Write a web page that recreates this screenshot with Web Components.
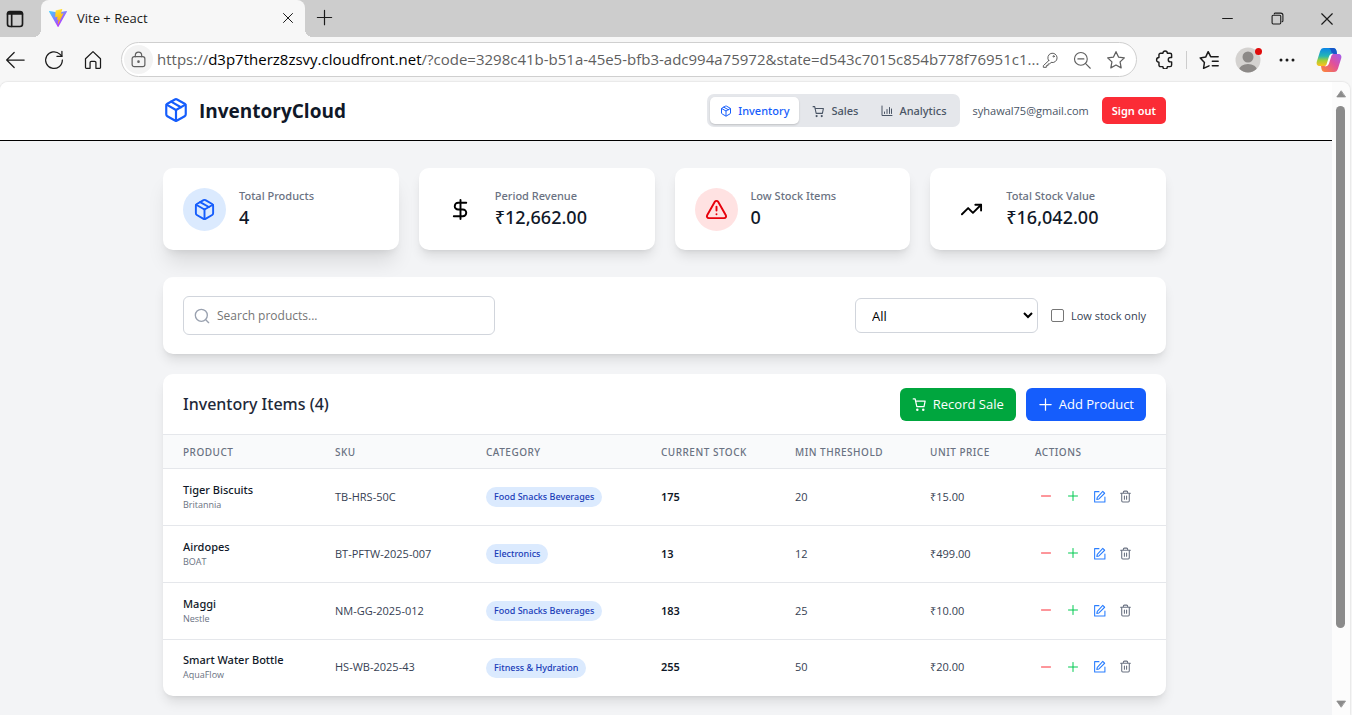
<!DOCTYPE html>
<html lang="en">
<head>
<meta charset="utf-8">
<title>Vite + React</title>
<style>
html, body { margin: 0; height: 100%; }
body { font-family: "Open Sans", "Noto Sans", "Liberation Sans", sans-serif; background: #f7f7f7; overflow: hidden; --medium: "Noto Sans", "Open Sans", sans-serif; }
</style>
</head>
<body>
<browser-window>
  <inventory-app></inventory-app>
</browser-window>
<script>
const ICONS = {
  package: '<path d="M11 21.73a2 2 0 0 0 2 0l7-4A2 2 0 0 0 21 16V8a2 2 0 0 0-1-1.73l-7-4a2 2 0 0 0-2 0l-7 4A2 2 0 0 0 3 8v8a2 2 0 0 0 1 1.73z"/><path d="M12 22V12"/><path d="M3.3 7 12 12l8.7-5"/><path d="m7.5 4.27 9 5.15"/>',
  cart: '<path d="M2 3h3l2.700 12.500h11.500l1.800-9H6"/><circle cx="8.500" cy="20.500" r="1"/><circle cx="18" cy="20.500" r="1"/>',
  chart: '<path d="M2 2v19h20"/><path d="M7 17v-3M12 17V9M17 17V5M21 17V8"/>',
  dollar: '<path d="M12 2v20"/><path d="M18 5H9.500a3.500 3.500 0 0 0 0 7h5a3.500 3.500 0 0 1 0 7H5"/>',
  alert: '<path d="m21.730 18-8-14a2 2 0 0 0-3.480 0l-8 14A2 2 0 0 0 4 21h16a2 2 0 0 0 1.730-3"/><path d="M12 9v4"/><path d="M12 17h.01"/>',
  trend: '<path d="M16 7h6v6"/><path d="m22 7-8.500 8.500-5-5L2 17"/>',
  search: '<circle cx="11" cy="11" r="9"/><path d="m22 22-4-4"/>',
  plus: '<path d="M3 12h18M12 3v18"/>',
  minus: '<path d="M3 12h18"/>',
  edit: '<path d="M11 3H3v19h19v-9"/><path d="M18 2.500 21.500 6 11 16.500l-4 1 1-4z"/>',
  trash: '<path d="M3 6h18M19 6v14a2 2 0 0 1-2 2H7a2 2 0 0 1-2-2V6M8 6V4a2 2 0 0 1 2-2h4a2 2 0 0 1 2 2v2M10 11v6M14 11v6"/>',
  tabs: '<rect x="3" y="3" width="18" height="18" rx="3"/><path d="M3 6h18M4 4.500h16M8 6v15"/>',
  back: '<path d="M23 12H2M11 3l-9 9 9 9"/>',
  reload: '<path d="M22 12a10 10 0 1 1-3-7l2.500 2.500"/><path d="M21.500 1.500v6h-6"/>',
  home: '<path d="M3 10.500 12 2l9 8.500V21a1 1 0 0 1-1 1h-4.500v-7a1.500 1.500 0 0 0-1.500-1.500h-4A1.500 1.500 0 0 0 8.500 15v7H4a1 1 0 0 1-1-1z"/>',
  lock: '<rect x="3" y="8" width="18" height="14" rx="3"/><path d="M7.500 8V6a4.500 4.500 0 0 1 9 0v2"/><circle cx="12" cy="15" r="1"/>',
  key: '<path d="M10 13 2 20.500V23h4.500v-2.500H9V18h2.500l2-2.500A7 7 0 1 0 10 13z"/><circle cx="17.500" cy="6.500" r="1"/>',
  zoomout: '<circle cx="10.500" cy="10.500" r="8.500"/><path d="m23 23-6.500-6.500M6.500 10.500h8"/>',
  star: '<path d="m12 2 3 6.500 7 .9-5.100 4.900 1.300 7.100L12 18l-6.200 3.400 1.300-7.100L2 9.400l7-.9z"/>',
  puzzle: '<path d="M7 4h3a2.800 2.800 0 0 1 5.600 0H19a2 2 0 0 1 2 2v3.500h-1.500a2.700 2.700 0 0 0 0 5.500H21v4a2 2 0 0 1-2 2h-3.400a2.800 2.800 0 0 1-5.600 0H7a2 2 0 0 1-2-2v-3.500a3 3 0 0 1 0-6V6a2 2 0 0 1 2-2z"/>',
  favs: '<path d="M12 19 5.500 22l1-7L1.500 9.500l6.500-1L11 2l3 6h9M16 13.500h7M16 19h7"/>',
  dots: '<g fill="currentColor" stroke="none"><circle cx="4" cy="12" r="2"/><circle cx="12" cy="12" r="2"/><circle cx="20" cy="12" r="2"/></g>',
  close: '<path d="m3 3 18 18M21 3 3 21"/>',
  restore: '<rect x="2" y="6" width="16" height="16" rx="2"/><path d="M6 3.500A2 2 0 0 1 8 2h10a4 4 0 0 1 4 4v10a2 2 0 0 1-1.500 2"/>',
  up: '<path d="M12 5 2 19h20z" fill="currentColor"/>',
  down: '<path d="M12 19 2 5h20z" fill="currentColor"/>'
};

class UiIcon extends HTMLElement {
  connectedCallback() {
    const size = this.getAttribute('size') || 16;
    this.attachShadow({ mode: 'open' }).innerHTML = `
      <style>:host{display:inline-flex;flex:none} svg{display:block}</style>
      <svg width="${size}" height="${size}" viewBox="0 0 24 24" fill="none" stroke="currentColor" aria-hidden="true"
        stroke-width="${this.getAttribute('weight') || 2}" stroke-linecap="round" stroke-linejoin="round">${ICONS[this.getAttribute('name')]}</svg>`;
  }
}
customElements.define('ui-icon', UiIcon);

class TabStrip extends HTMLElement {
  connectedCallback() {
    this.attachShadow({ mode: 'open' }).innerHTML = `
      <style>
        :host{display:flex;height:37px;background:#cdcdcd;color:#1b1b1b}
        button{border:0;background:none;padding:0;color:inherit;display:flex;align-items:center;justify-content:center}
        .menu{width:30px}
        .tab{display:flex;align-items:center;width:264px;margin-left:11px;box-sizing:border-box;padding:0 11px 2px 8px;background:#f7f7f7;border-radius:8px 8px 0 0;font-size:13px;line-height:16px;position:relative}
        .tab::before,.tab::after{content:"";position:absolute;bottom:0;width:8px;height:8px}
        .tab::before{left:-8px;background:radial-gradient(circle at 0 0,transparent 8px,#f7f7f7 8px)}
        .tab::after{right:-8px;background:radial-gradient(circle at 100% 0,transparent 8px,#f7f7f7 8px)}
        .title{flex:1;margin-left:10px}
        .new{width:38px;padding-bottom:2px}
        .win{margin-left:auto;display:flex}
        .win button{width:50px}
      </style>
      <button class="menu" aria-label="Tab actions"><ui-icon name="tabs" size="20" weight="2"></ui-icon></button>
      <div class="tab">
        <svg width="18" height="18" viewBox="0 0 256 257" aria-hidden="true"><defs>
          <linearGradient id="a" x1="0" y1="0" x2=".7" y2=".9"><stop stop-color="#41d1ff"/><stop offset="1" stop-color="#bd34fe"/></linearGradient>
          <linearGradient id="b" x1=".4" y1="0" x2=".6" y2="1"><stop stop-color="#ffea83"/><stop offset=".1" stop-color="#ffdd35"/><stop offset="1" stop-color="#ffa800"/></linearGradient></defs>
          <path fill="url(#a)" d="M255.200 37.900 134.900 252.900c-2.500 4.400-8.900 4.500-11.400 0L.900 37.900c-2.700-4.700 1.300-10.500 6.700-9.500l120.400 21.500c.8.100 1.600.1 2.300 0L248.100 28.400c5.400-1 9.500 4.700 7.100 9.500Z"/>
          <path fill="url(#b)" d="M185.400 0 96.400 17.500a3.300 3.300 0 0 0-2.600 3l-5.500 92.500a3.300 3.300 0 0 0 4 3.400l24.800-5.700a3.300 3.300 0 0 1 4 3.900l-7.400 36.100a3.300 3.300 0 0 0 4.200 3.800l15.300-4.600a3.300 3.300 0 0 1 4.200 3.800l-11.700 56.600c-.7 3.500 4 5.500 5.900 2.400l1.300-2L205.400 66c1.200-2.400-.9-5.200-3.600-4.700l-25.500 4.900a3.300 3.300 0 0 1-3.800-4.100L189.200 4.100a3.300 3.300 0 0 0-3.800-4.100Z"/></svg>
        <span class="title">Vite + React</span>
        <button aria-label="Close tab"><ui-icon name="close" size="12" weight="2"></ui-icon></button>
      </div>
      <button class="new" aria-label="New tab"><ui-icon name="plus" size="19" weight="1.500"></ui-icon></button>
      <div class="win">
        <button aria-label="Minimize"><ui-icon name="minus" size="13"></ui-icon></button>
        <button aria-label="Restore"><ui-icon name="restore" size="13"></ui-icon></button>
        <button aria-label="Close"><ui-icon name="close" size="14"></ui-icon></button>
      </div>`;
  }
}
customElements.define('tab-strip', TabStrip);

class AddressBar extends HTMLElement {
  connectedCallback() {
    this.attachShadow({ mode: 'open' }).innerHTML = `
      <style>
        :host{display:flex;align-items:center;height:45px;box-sizing:border-box;padding:0 10px 0 5px;background:#f7f7f7;color:#1b1b1b}
        button{border:0;background:none;padding:0;color:inherit;display:flex;align-items:center;justify-content:center;flex:none}
        .nav{display:flex;gap:19px;margin-right:18px}
        .nav button{width:20px}
        .url{flex:1;min-width:0;height:35px;box-sizing:border-box;display:flex;align-items:center;border:1px solid #cfcfcf;border-radius:18px;background:#fff;padding:0 10px 0 2px;color:#5f5f5f}
        .lock{width:29px;height:29px;border-radius:15px;background:#f3f3f3}
        .text{flex:1;min-width:0;margin-left:4px;font-size:15px;line-height:20px;padding-bottom:2px;white-space:nowrap;overflow:hidden}
        b{font-weight:400;color:#000}
        .in{display:flex;align-items:center;gap:15px}
        .right{display:flex;align-items:center;margin-left:18px}
        .sep{width:1px;height:18px;background:#cdcdcd;margin:0 12px}
        .me{position:relative;margin:0 17px 0 16px}
        .me i{position:absolute;right:-1px;top:1px;width:7px;height:7px;border-radius:4px;background:#e00b0b}
        .more{margin-right:20px}
      </style>
      <div class="nav">
        <button aria-label="Back"><ui-icon name="back" size="20" weight="1.500"></ui-icon></button>
        <button aria-label="Refresh"><ui-icon name="reload" size="20" weight="1.500"></ui-icon></button>
        <button aria-label="Home"><ui-icon name="home" size="20" weight="1.500"></ui-icon></button>
      </div>
      <div class="url">
        <button class="lock" aria-label="Site information"><ui-icon name="lock" size="17" weight="1.700"></ui-icon></button>
        <div class="text">https://<b>d3p7therz8zsvy.cloudfront.net</b>/?code=3298c41b-b51a-45e5-bfb3-adc994a75972&amp;state=d543c7015c854b778f76951c1...</div>
        <div class="in">
          <button aria-label="Passwords"><ui-icon name="key" size="16" weight="1.500"></ui-icon></button>
          <button aria-label="Zoom"><ui-icon name="zoomout" size="18" weight="1.500"></ui-icon></button>
          <button aria-label="Add to favorites"><ui-icon name="star" size="20" weight="1.500"></ui-icon></button>
        </div>
      </div>
      <div class="right">
        <button aria-label="Extensions"><ui-icon name="puzzle" size="19" weight="1.800"></ui-icon></button>
        <span class="sep"></span>
        <button aria-label="Favorites"><ui-icon name="favs" size="20" weight="1.800"></ui-icon></button>
        <button class="me" aria-label="Profile"><svg width="26" height="26" viewBox="0 0 26 26" aria-hidden="true"><defs><clipPath id="c"><circle cx="13" cy="13" r="12.500"/></clipPath></defs><g clip-path="url(#c)"><path fill="#d4d2d0" d="M0 0h26v26H0z"/><circle cx="13" cy="10" r="5.500" fill="#8c8987"/><ellipse cx="13" cy="23" rx="9" ry="6" fill="#8c8987"/></g></svg><i></i></button>
        <button class="more" aria-label="Settings and more"><ui-icon name="dots" size="18"></ui-icon></button>
        <button aria-label="Copilot"><svg width="26" height="26" viewBox="0 0 26 26" aria-hidden="true"><defs>
          <linearGradient id="d" x1="0" y1="0" x2="0" y2="1"><stop stop-color="#0a84e8"/><stop offset=".45" stop-color="#25b6b4"/><stop offset=".7" stop-color="#a6cf35"/><stop offset="1" stop-color="#ffc01f"/></linearGradient>
          <linearGradient id="e" x1="1" y1="0" x2="0" y2="1"><stop stop-color="#a05cf0"/><stop offset=".45" stop-color="#e0509c"/><stop offset="1" stop-color="#ff8a30"/></linearGradient></defs>
          <path fill="url(#d)" d="M8 1h9c2 0 3 1 3.500 3L21 7h-4c-1.500 0-2.300 1-2.800 2.500L12 16c-.6 2-1.500 3-3.500 3H4c-3 0-4-2-3-5L4 4.500C4.800 2 6 1 8 1z"/>
          <path fill="#1657c9" d="M13 1h4c2 0 3 1 3.500 3L21 7h-5c-1-3-1-5-3-6z"/>
          <path fill="url(#e)" d="M18 25H9c-2 0-3-1-3.500-3L5 19h4c1.500 0 2.300-1 2.800-2.500L14 10c.6-2 1.500-3 3.500-3H22c3 0 4 2 3 5l-3 9.500c-.8 2.500-2 3.500-4 3.500z"/>
          <path fill="#fff" d="M10.500 17.500 13 9.500c.6-2 2-3 4.500-3-1.500 1-2 2-2.400 3.200L13 16.500c-.7 2-2 3-4.500 3 1-.5 1.600-1 2-2z"/></svg></button>
      </div>`;
  }
}
customElements.define('address-bar', AddressBar);

class BrowserWindow extends HTMLElement {
  connectedCallback() {
    this.attachShadow({ mode: 'open' }).innerHTML = `
      <style>
        :host{display:flex;flex-direction:column;height:100vh}
        .view{flex:1;min-height:0;display:flex;margin-right:2px;border-radius:8px 8px 0 0;overflow:hidden;box-shadow:0 0 2px #00000033}
        .page{flex:1;min-width:0;overflow:hidden;background:#f3f4f6}
        .scroll{width:18px;box-sizing:border-box;padding:7px 1px 6px 0;background:#fcfcfc;color:#8b8b8b;display:flex;flex-direction:column;align-items:center;gap:7px}
        .track{flex:1;display:flex}
        .thumb{width:9px;height:89%;border-radius:5px;background:#8b8b8b}
      </style>
      <tab-strip></tab-strip>
      <address-bar></address-bar>
      <div class="view">
        <div class="page"><slot></slot></div>
        <div class="scroll"><ui-icon name="up" size="10"></ui-icon><div class="track"><div class="thumb"></div></div><ui-icon name="down" size="10"></ui-icon></div>
      </div>`;
  }
}
customElements.define('browser-window', BrowserWindow);

class AppHeader extends HTMLElement {
  connectedCallback() {
    this.attachShadow({ mode: 'open' }).innerHTML = `
      <style>
        :host{display:block;background:#fff;border-bottom:1px solid #000;padding:0 3px 2px 0}
        .in{max-width:1003px;margin:0 auto;height:56px;display:flex;align-items:center}
        .logo{color:#155dfc}
        h1{margin:0 0 0 10px;padding-top:2px;font-size:19px;line-height:28px;font-weight:700;color:#101828;flex:1}
        nav{display:flex;gap:3px;background:#e5e7eb;border-radius:7px;padding:3px}
        nav a{display:flex;align-items:center;gap:6px;height:27px;padding:0 10px;border-radius:5px;font:500 11px/17px var(--medium);color:#4a5565;text-decoration:none}
        nav a.on{background:#fff;color:#155dfc;box-shadow:0 1px 2px #0000002a}
        nav ui-icon{padding-top:2px}
        .mail{margin:0 13px;font-size:11px;color:#4a5565}
        button{height:27px;padding:0 10px;border:0;border-radius:5px;background:#fb2c36;color:#fff;font:600 11px/17px var(--medium)}
      </style>
      <div class="in">
        <ui-icon class="logo" name="package" size="26"></ui-icon>
        <h1>InventoryCloud</h1>
        <nav>
          <a class="on" href="#inventory"><ui-icon name="package" size="12"></ui-icon>Inventory</a>
          <a href="#sales"><ui-icon name="cart" size="13"></ui-icon>Sales</a>
          <a href="#analytics"><ui-icon name="chart" size="12"></ui-icon>Analytics</a>
        </nav>
        <span class="mail">syhawal75@gmail.com</span>
        <button>Sign out</button>
      </div>`;
  }
}
customElements.define('app-header', AppHeader);

class StatCard extends HTMLElement {
  connectedCallback() {
    this.attachShadow({ mode: 'open' }).innerHTML = `
      <style>
        :host{display:flex;align-items:center;gap:13px;height:82px;box-sizing:border-box;padding:0 20px;background:#fff;border-radius:10px;color:#000;box-shadow:0 8px 12px -2px #0000001a,0 3px 5px -3px #0000001a}
        :host([raised]){box-shadow:0 16px 20px -4px #0000001a,0 6px 8px -5px #0000001a}
        .disc{width:43px;height:43px;border-radius:22px;display:flex;align-items:center;justify-content:center}
        :host([tone=blue]) .disc{background:#dbeafe;color:#155dfc}
        :host([tone=red]) .disc{background:#ffe2e2;color:#e7000b}
        .label{font:500 11px/17px var(--medium);color:#6a7282}
        .value{font:500 18px/27px var(--medium);color:#101828}
      </style>
      <div class="disc"><ui-icon name="${this.getAttribute('icon')}" size="23"></ui-icon></div>
      <div><div class="label">${this.getAttribute('label')}</div><div class="value"><slot></slot></div></div>`;
  }
}
customElements.define('stat-card', StatCard);

class FilterBar extends HTMLElement {
  connectedCallback() {
    this.attachShadow({ mode: 'open' }).innerHTML = `
      <style>
        :host{display:flex;align-items:center;justify-content:space-between;height:77px;box-sizing:border-box;padding:0 20px;background:#fff;border-radius:10px;box-shadow:0 8px 12px -2px #0000001a,0 3px 5px -3px #0000001a}
        .search{width:312px;height:39px;box-sizing:border-box;display:flex;align-items:center;gap:7px;padding:0 10px;border:1px solid #d1d5dc;border-radius:6px;color:#99a1af}
        input[type=search]{flex:1;min-width:0;border:0;outline:0;padding:0;background:none;font:12px "Open Sans",sans-serif;color:#101828}
        input::placeholder{color:#757575;opacity:1}
        .right{display:flex;align-items:center;gap:13px}
        .pick{display:flex;position:relative}
        select{appearance:none;width:183px;height:35px;border:1px solid #d1d5dc;border-radius:6px;background:#fff;padding:0 16px;font:13px "Open Sans",sans-serif;color:#000}
        .pick svg{position:absolute;right:5px;top:13px;pointer-events:none}
        label.chk{display:flex;align-items:center;gap:7px;font-size:11px;color:#364153}
        .chk input{appearance:none;width:13px;height:13px;margin:0;border:1px solid #767676;border-radius:2px;background:#fff}
      </style>
      <label class="search"><ui-icon name="search" size="16"></ui-icon><input type="search" aria-label="Search products" placeholder="Search products..."></label>
      <div class="right">
        <div class="pick"><select aria-label="Category"><option>All</option></select><svg width="10" height="8" viewBox="0 0 10 8" aria-hidden="true"><path d="m1 2 4 4 4-4" fill="none" stroke="#000" stroke-width="2"/></svg></div>
        <label class="chk"><input type="checkbox">Low stock only</label>
      </div>`;
  }
}
customElements.define('filter-bar', FilterBar);

const ITEMS = [
  ['Tiger Biscuits', 'Britannia', 'TB-HRS-50C', 'Food Snacks Beverages', 175, 20, '₹15.00'],
  ['Airdopes', 'BOAT', 'BT-PFTW-2025-007', 'Electronics', 13, 12, '₹499.00'],
  ['Maggi', 'Nestle', 'NM-GG-2025-012', 'Food Snacks Beverages', 183, 25, '₹10.00'],
  ['Smart Water Bottle', 'AquaFlow', 'HS-WB-2025-43', 'Fitness &amp; Hydration', 255, 50, '₹20.00']
];

class InventoryTable extends HTMLElement {
  connectedCallback() {
    const rows = ITEMS.map(([name, brand, sku, cat, stock, min, price]) => `
      <tr><td><div class="name">${name}</div><div class="brand">${brand}</div></td>
      <td>${sku}</td><td class="cat"><span class="pill">${cat}</span></td><td class="stock">${stock}</td><td>${min}</td><td>${price}</td>
      <td><div class="acts">
        <button class="r" aria-label="Decrease stock"><ui-icon name="minus" size="12"></ui-icon></button>
        <button class="g" aria-label="Increase stock"><ui-icon name="plus" size="12"></ui-icon></button>
        <button class="b" aria-label="Edit"><ui-icon name="edit" size="13"></ui-icon></button>
        <button class="k" aria-label="Delete"><ui-icon name="trash" size="13"></ui-icon></button>
      </div></td></tr>`).join('');
    this.attachShadow({ mode: 'open' }).innerHTML = `
      <style>
        :host{display:block;background:#fff;border-radius:10px;overflow:hidden;box-shadow:0 8px 12px -2px #0000001a,0 3px 5px -3px #0000001a}
        .top{display:flex;align-items:center;gap:10px;height:60px;padding:0 20px}
        h2{flex:1;margin:0;font:500 16px/24px var(--medium);color:#1e2939}
        .top button{display:flex;align-items:center;gap:6px;height:33px;padding:0 12px;border:0;border-radius:6px;color:#fff;font:13px "Open Sans",sans-serif}
        .sale{background:#00a63e}.top .add{background:#155dfc}
        table{width:100%;table-layout:fixed;border-collapse:collapse;text-align:left}
        th{height:34px;box-sizing:border-box;padding:0 0 0 20px;border-top:1px solid #e5e7eb;background:#f9fafb;font:500 10px/14px var(--medium);letter-spacing:.5px;color:#6a7282}
        td{height:57px;box-sizing:border-box;padding:0 0 2px 20px;border-top:1px solid #e5e7eb;font-size:11px;line-height:17px;color:#364153}
        tr:last-child td{height:56px}
        td.cat{padding-bottom:0}
        .name{font:500 11px/17px var(--medium);color:#101828}
        .brand{font-size:9px;line-height:14px;color:#6a7282}
        .stock{font:600 11px/17px var(--medium);color:#101828}
        .pill{display:inline-block;padding:0 8px;border-radius:10px;background:#dbeafe;color:#193cb8;font:500 9px/20px var(--medium)}
        .acts{display:flex;gap:6px}
        .acts button{width:20px;height:20px;padding:0;border:0;background:none;display:flex;align-items:center;justify-content:center}
        .r{color:#fb2c36}.g{color:#00c950}.b{color:#2b7fff}.k{color:#6a7282}
        .acts .r,.acts .g{width:21px}
      </style>
      <div class="top"><h2>Inventory Items (4)</h2>
        <button class="sale"><ui-icon name="cart" size="15"></ui-icon>Record Sale</button>
        <button class="add"><ui-icon name="plus" size="15"></ui-icon>Add Product</button></div>
      <table><colgroup><col style="width:152px"><col style="width:151px"><col style="width:175px"><col style="width:134px"><col style="width:135px"><col style="width:105px"><col style="width:151px"></colgroup>
        <thead><tr><th>PRODUCT</th><th>SKU</th><th>CATEGORY</th><th>CURRENT STOCK</th><th>MIN THRESHOLD</th><th>UNIT PRICE</th><th>ACTIONS</th></tr></thead>
        <tbody>${rows}</tbody></table>`;
  }
}
customElements.define('inventory-table', InventoryTable);

class InventoryApp extends HTMLElement {
  connectedCallback() {
    this.attachShadow({ mode: 'open' }).innerHTML = `
      <style>
        :host{display:block}
        .wrap{padding:27px 3px 27px 0}
        main{max-width:1003px;margin:0 auto}
        .stats{display:grid;grid-template-columns:repeat(4,1fr);gap:20px;margin-bottom:27px}
        filter-bar{margin-bottom:20px}
      </style>
      <app-header></app-header>
      <div class="wrap"><main>
        <div class="stats">
          <stat-card raised tone="blue" icon="package" label="Total Products">4</stat-card>
          <stat-card icon="dollar" label="Period Revenue">₹12,662.00</stat-card>
          <stat-card tone="red" icon="alert" label="Low Stock Items">0</stat-card>
          <stat-card icon="trend" label="Total Stock Value">₹16,042.00</stat-card>
        </div>
        <filter-bar></filter-bar>
        <inventory-table></inventory-table>
      </main></div>`;
  }
}
customElements.define('inventory-app', InventoryApp);
</script>
</body>
</html>
